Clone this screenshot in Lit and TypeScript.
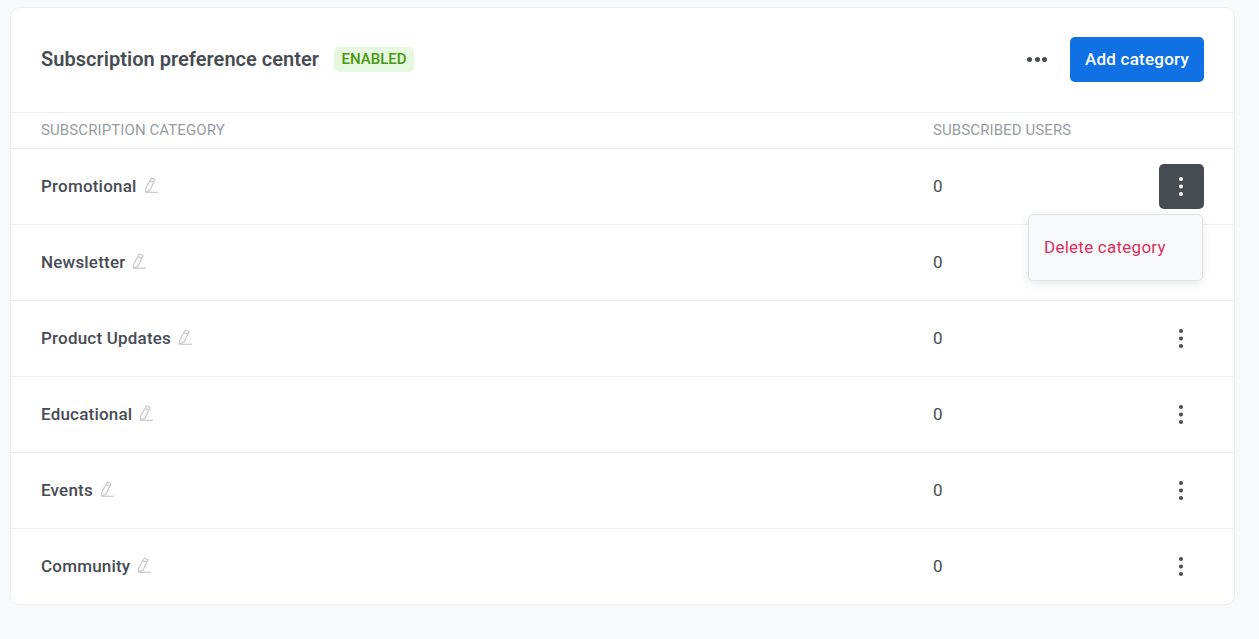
import { LitElement, html, css, svg } from "lit";
import { customElement } from "lit/decorators.js";

const cats = ["Promotional", "Newsletter", "Product Updates", "Educational", "Events", "Community"];

const pencil = html`<svg class="pencil" viewBox="0 0 14 16" width="14" height="16" fill="none" stroke="#c9cbcf" stroke-width="1.3">
  ${svg`<path d="M7.4 1 L11 2.6 L5.8 13.4 L1.4 15 L1.8 11 Z" stroke-linejoin="round"/>
  <path d="M6.2 3.6 L9.8 5.2"/>
  <path d="M1.4 15.3 H14"/>`}
</svg>`;

const dotsV = (c: string) => html`<svg class="dots" viewBox="0 0 4 19" width="4" height="19" fill="${c}">
  ${svg`<circle cx="2" cy="2" r="2"/><circle cx="2" cy="9.5" r="2"/><circle cx="2" cy="17" r="2"/>`}
</svg>`;

@customElement("app-root")
export class AppRoot extends LitElement {
  static styles = css`
    :host {
      display: block;
      min-height: 639px;
      box-sizing: border-box;
      background: #f8f9fb;
      padding: 7px 24px 0 10px;
      font-family: Roboto, "Liberation Sans", sans-serif;
      color: #474c53;
    }
    .card {
      background: #fff;
      border: 1px solid #eceef2;
      border-radius: 10px;
      box-sizing: border-box;
      height: 598px;
    }
    .head {
      height: 105px;
      box-sizing: border-box;
      padding: 0 30px 2px;
      display: flex;
      align-items: center;
      border-bottom: 1px solid #eceef2;
    }
    .title {
      font-size: 20px;
      font-weight: 600;
      letter-spacing: 0.03px;
      color: #474c53;
    }
    .badge {
      margin-left: 15px;
      height: 25px;
      width: 80px;
      box-sizing: border-box;
      display: flex;
      align-items: center;
      justify-content: center;
      background: #e7f8e1;
      color: #46990f;
      font-size: 15px;
      font-weight: 500;
      border-radius: 5px;
    }
    .spacer { flex: 1; }
    .more {
      display: flex;
      gap: 2.5px;
      margin-right: 23px;
    }
    .more i {
      width: 5px;
      height: 5px;
      border-radius: 50%;
      background: #474c53;
    }
    .add {
      height: 45px;
      width: 134px;
      display: flex;
      align-items: center;
      justify-content: center;
      background: #0f71e4;
      color: #fff;
      font-size: 17px;
      font-weight: 500;
      letter-spacing: 0.25px;
      border-radius: 5px;
    }
    .row {
      display: grid;
      grid-template-columns: 892px 1fr 45px;
      align-items: center;
      padding: 0 30px;
      border-bottom: 1px solid #eceef2;
      height: 76px;
      box-sizing: border-box;
      position: relative;
    }
    .row:last-child { border-bottom: none; height: 75px; }
    .row.th {
      height: 36px;
      font-size: 15px;
      letter-spacing: 0.1px;
      color: #999ca3;
      padding-bottom: 2px;
    }
    .name {
      display: flex;
      align-items: center;
      gap: 7px;
      font-size: 17px;
      font-weight: 500;
      letter-spacing: 0.2px;
      color: #474c53;
      padding-bottom: 2px;
    }
    .pencil { margin-top: -1px; }
    .num {
      font-size: 17px;
      letter-spacing: 0.3px;
      color: #474c53;
      padding-bottom: 2px;
    }
    .act {
      width: 45px;
      height: 45px;
      border-radius: 5px;
      display: flex;
      align-items: center;
      justify-content: center;
    }
    .act.on { background: #474c53; }
    .dots { margin: 0 1.5px 1px 0; }
    .menu {
      position: absolute;
      z-index: 2;
      top: 65px;
      right: 31px;
      width: 175px;
      height: 67px;
      box-sizing: border-box;
      background: #f8f9fb;
      border: 1px solid #e0e2e6;
      border-radius: 5px;
      box-shadow: 0 3px 8px rgba(40, 45, 60, 0.1);
      display: flex;
      align-items: center;
      padding: 0 0 2px 15px;
      font-size: 17px;
      letter-spacing: 0.25px;
      color: #d9305f;
    }
  `;

  render() {
    return html`
      <div class="card">
        <div class="head">
          <span class="title">Subscription preference center</span>
          <span class="badge">ENABLED</span>
          <span class="spacer"></span>
          <span class="more"><i></i><i></i><i></i></span>
          <span class="add">Add category</span>
        </div>
        <div class="row th">
          <span>SUBSCRIPTION CATEGORY</span>
          <span>SUBSCRIBED USERS</span>
          <span></span>
        </div>
        ${cats.map(
          (c, i) => html`
            <div class="row">
              <span class="name">${c}${pencil}</span>
              <span class="num">0</span>
              ${i === 1
                ? html`<span></span>`
                : html`<span class="act ${i === 0 ? "on" : ""}">${dotsV(i === 0 ? "#fff" : "#474c53")}</span>`}
              ${i === 0 ? html`<div class="menu">Delete category</div>` : ""}
            </div>
          `
        )}
      </div>
    `;
  }
}
